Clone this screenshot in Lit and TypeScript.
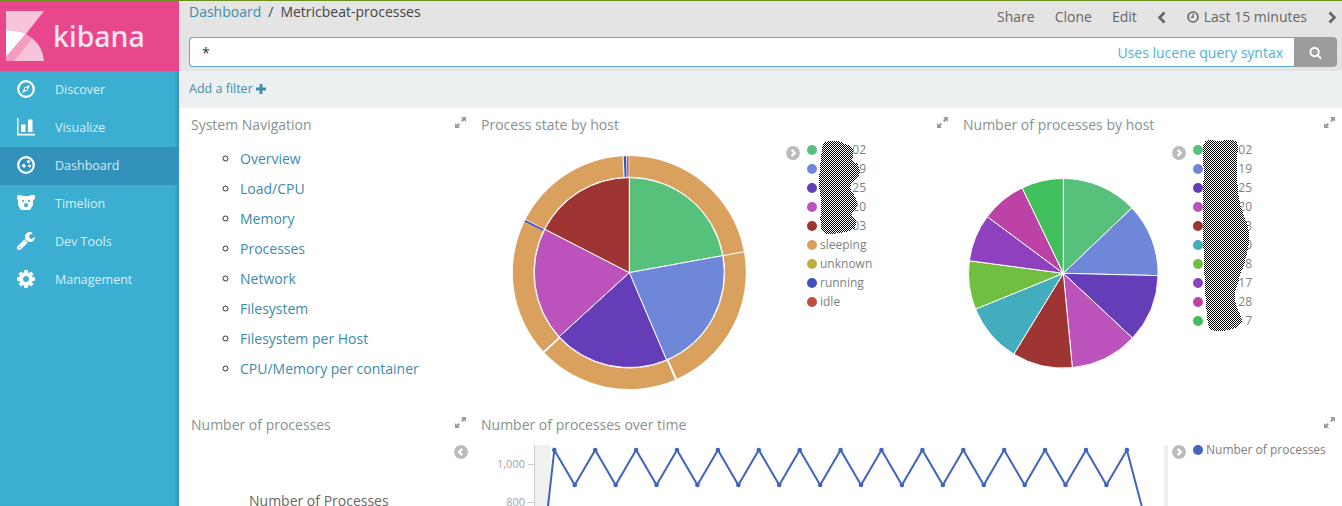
import { LitElement, html, css, svg } from 'lit';
import { customElement } from 'lit/decorators.js';

const WRENCH = 'M448 1472q0-26-19-45t-45-19-45 19-19 45 19 45 45 19 45-19 19-45zm644-420l-682 682q-37 37-90 37-52 0-91-37l-106-108q-38-36-38-90 0-53 38-91l681-681q39 98 114.5 173.5t173.5 114.5zm634-435q0 39-23 106-47 134-164.5 217.5t-258.5 83.5q-185 0-316.5-131.5t-131.5-316.5 131.5-316.5 316.5-131.5q58 0 121.5 16.5t107.5 46.5q16 11 16 28t-16 28l-293 169v224l193 107q5-3 79-48.5t135.5-81 70.5-35.5q15 0 23.5 10t8.5 25z';
const GEAR = 'M1152 896q0-106-75-181t-181-75-181 75-75 181 75 181 181 75 181-75 75-181zm512-109v222q0 12-8 23t-20 13l-185 28q-19 54-39 91 35 50 107 138 10 12 10 25t-9 23q-27 37-99 108t-94 71q-12 0-26-9l-138-108q-44 23-91 38-16 136-29 186-7 28-36 28h-222q-14 0-24.5-8.5t-11.5-21.5l-28-184q-49-16-90-37l-141 107q-10 9-25 9-14 0-25-11-126-114-165-168-7-10-7-23 0-12 8-23 15-21 51-66.5t54-70.5q-27-50-41-99l-183-27q-13-2-21-12.5t-8-23.5v-222q0-12 8-23t19-13l186-28q14-46 39-92-40-57-107-138-10-12-10-24 0-10 9-23 26-36 98.5-107.5t94.5-71.5q13 0 26 10l138 107q44-23 91-38 16-136 29-186 7-28 36-28h222q14 0 24.5 8.5t11.5 21.5l28 184q49 16 90 37l142-107q9-9 24-9 13 0 25 10 129 119 165 170 7 8 7 22 0 12-8 23-15 21-51 66.5t-54 70.5q26 50 41 98l183 28q13 2 22 12.5t9 23.5z';
const SEARCH = 'M1216 832q0-185-131.5-316.5t-316.5-131.5-316.5 131.5-131.5 316.5 131.5 316.5 316.5 131.5 316.5-131.5 131.5-316.5zm512 832q0 52-38 90t-90 38q-54 0-90-38l-343-342q-179 124-399 124-143 0-273.5-55.5t-225-150-150-225-55.5-273.5 55.5-273.5 150-225 225-150 273.5-55.5 273.5 55.5 225 150 150 225 55.5 273.5q0 220-124 399l343 343q37 37 37 90z';

const C = {
  green: '#57c17b', blue: '#6f87d8', purple: '#663db8', magenta: '#bc52bc', red: '#9e3533',
  sleeping: '#daa05d', unknown: '#bfaf40', running: '#4050bf', idle: '#bf5040',
  teal: '#43adbd', lime: '#70bf41', violet: '#8e40bf', pink: '#bd42a5', green2: '#40bf5c',
};

// angles are degrees clockwise from 12 o'clock
function polar(cx: number, cy: number, r: number, deg: number) {
  const a = (deg * Math.PI) / 180;
  return `${(cx + r * Math.sin(a)).toFixed(2)} ${(cy - r * Math.cos(a)).toFixed(2)}`;
}

function wedge(cx: number, cy: number, r0: number, r1: number, a0: number, a1: number) {
  const large = a1 - a0 > 180 ? 1 : 0;
  if (r0 === 0) {
    return `M${cx} ${cy}L${polar(cx, cy, r1, a0)}A${r1} ${r1} 0 ${large} 1 ${polar(cx, cy, r1, a1)}Z`;
  }
  return `M${polar(cx, cy, r0, a0)}L${polar(cx, cy, r1, a0)}A${r1} ${r1} 0 ${large} 1 ${polar(cx, cy, r1, a1)}L${polar(cx, cy, r0, a1)}A${r0} ${r0} 0 ${large} 0 ${polar(cx, cy, r0, a0)}Z`;
}

// smooth closed outline through points given in zoom (3x) coordinates
function blob(pts: number[][]) {
  const p = pts.map(([x, y]) => [x / 3, y / 3]);
  const mid = (a: number[], b: number[]) => `${((a[0] + b[0]) / 2).toFixed(1)} ${((a[1] + b[1]) / 2).toFixed(1)}`;
  let d = `M${mid(p[p.length - 1], p[0])}`;
  p.forEach((pt, i) => {
    d += `Q${pt[0].toFixed(1)} ${pt[1].toFixed(1)} ${mid(pt, p[(i + 1) % p.length])}`;
  });
  return d + 'Z';
}

const innerSlices: [number, number, string][] = [
  [0, 79.7, C.green], [79.7, 156.9, C.blue], [156.9, 227.6, C.purple], [227.6, 297.2, C.magenta], [297.2, 360, C.red],
];
const outerSlices: [number, number, string][] = [
  [0, 79.4, C.sleeping], [80, 155.8, C.sleeping], [156.9, 226.6, C.sleeping], [227.6, 295.9, C.sleeping],
  [295.9, 296.9, C.running], [297.2, 356.6, C.sleeping], [357.2, 358.4, C.running], [358.8, 359.6, C.idle],
];
const hostSlices: [number, number, string][] = [
  [0, 46.4, C.green], [46.4, 91.4, C.blue], [91.4, 133.1, C.purple], [133.1, 174.5, C.magenta], [174.5, 211.5, C.red],
  [211.5, 247.8, C.teal], [247.8, 277.6, C.lime], [277.6, 306.7, C.violet], [306.7, 334.3, C.pink], [334.3, 360, C.green2],
];

const stateLegend = [
  { c: C.green, t: '02', masked: true }, { c: C.blue, t: '19', masked: true }, { c: C.purple, t: '25', masked: true },
  { c: C.magenta, t: '20', masked: true }, { c: C.red, t: '03', masked: true }, { c: C.sleeping, t: 'sleeping' },
  { c: C.unknown, t: 'unknown' }, { c: C.running, t: 'running' }, { c: C.idle, t: 'idle' },
];
const hostLegend = [
  { c: C.green, t: '02' }, { c: C.blue, t: '19' }, { c: C.purple, t: '25' }, { c: C.magenta, t: '20' }, { c: C.red, t: '3' },
  { c: C.teal, t: '0' }, { c: C.lime, t: '8' }, { c: C.violet, t: '17' }, { c: C.pink, t: '28' }, { c: C.green2, t: '7' },
].map((l) => ({ ...l, masked: true }));

const scribbleState = [[70, 20], [110, 15], [130, 25], [160, 35], [160, 60], [155, 78], [178, 88], [180, 125], [150, 148], [152, 165], [172, 195], [168, 225], [150, 238], [168, 250], [168, 282], [120, 295], [65, 300], [60, 250], [65, 200], [55, 150], [60, 100], [65, 50]];
const scribbleHost = [[25, 20], [50, 12], [70, 22], [100, 12], [130, 20], [128, 50], [124, 90], [126, 130], [132, 200], [150, 250], [165, 290], [160, 340], [150, 380], [132, 430], [115, 490], [132, 530], [145, 565], [110, 585], [60, 590], [40, 580], [35, 530], [30, 470], [28, 400], [25, 330], [25, 250], [22, 180], [28, 110], [22, 60]];

const navItems = ['Overview', 'Load/CPU', 'Memory', 'Processes', 'Network', 'Filesystem', 'Filesystem per Host', 'CPU/Memory per container'];

@customElement('app-root')
export class AppRoot extends LitElement {
  static override styles = css`
    :host {
      display: flex;
      height: 505px;
      border-top: 1px solid #6f8f1f;
      overflow: hidden;
      font-family: 'Open Sans', sans-serif;
      font-size: 14px;
      background: #fff;
    }
    .sidebar {
      width: 179px;
      flex-shrink: 0;
      background: #3caed2;
      box-shadow: inset -5px 0 5px -4px rgba(0, 0, 0, 0.22);
    }
    .logo {
      height: 70px;
      background: #e8488b;
      display: flex;
      align-items: center;
      padding-left: 5px;
      gap: 8px;
      box-sizing: border-box;
    }
    .logo-text {
      color: #fde6f0;
      font-family: 'Noto Sans', sans-serif;
      font-size: 28.5px;
      font-weight: 500;
    }
    .side-item {
      height: 38px;
      box-sizing: border-box;
      padding-bottom: 2px;
      display: flex;
      align-items: center;
      color: rgba(255, 255, 255, 0.82);
      font-size: 12.5px;
    }
    .side-item.active {
      background: #3292bc;
    }
    .side-icon {
      width: 55px;
      display: flex;
      justify-content: center;
      padding-right: 3px;
      box-sizing: border-box;
    }
    .main {
      flex: 1;
      min-width: 0;
    }
    .topbar {
      height: 70px;
      background: #e4e4e4;
      box-sizing: border-box;
      padding: 0 5px 0 10px;
    }
    .top-row {
      height: 36px;
      display: flex;
      justify-content: space-between;
      align-items: flex-start;
      line-height: 22px;
    }
    .crumbs {
      display: flex;
      gap: 7px;
      color: #444;
    }
    .crumbs a {
      color: #3f8dae;
    }
    .actions {
      display: flex;
      align-items: center;
      margin-top: 5px;
      color: #666;
    }
    .actions .act {
      margin-right: 20px;
    }
    .actions svg {
      display: block;
    }
    .actions .wider {
      margin-right: 21px;
    }
    .actions .clock {
      margin-right: 5px;
    }
    .search {
      display: flex;
      height: 30px;
    }
    .query {
      flex: 1;
      display: flex;
      justify-content: space-between;
      align-items: center;
      background: #fff;
      border: 1px solid #5fabc8;
      border-right: none;
      border-radius: 4px 0 0 4px;
      padding: 0 11px 0 12px;
    }
    .query .star {
      color: #333;
    }
    .query .hint {
      color: #4fb2d6;
    }
    .search-btn {
      width: 43px;
      background: #9c9c9c;
      border-radius: 0 4px 4px 0;
      display: flex;
      align-items: center;
      justify-content: center;
    }
    .filters {
      height: 37px;
      box-sizing: border-box;
      padding: 0 0 2px 10px;
      background: #ecf0f1;
      display: flex;
      align-items: center;
      gap: 3px;
      color: #3f8dae;
      font-size: 12.5px;
    }
    .dashboard {
      display: grid;
      grid-template-columns: 290px 482px 1fr;
      grid-template-rows: 300px 98px;
      padding-left: 1px;
    }
    .panel {
      min-width: 0;
      overflow: hidden;
    }
    .wide {
      grid-column: 2 / 4;
    }
    .head {
      height: 31px;
      box-sizing: border-box;
      padding: 8px 4px 0 11px;
      display: flex;
      justify-content: space-between;
      line-height: 18px;
      color: #86938f;
      font-size: 14px;
    }
    .head.last {
      padding-right: 7px;
    }
    .expand {
      margin-top: 1px;
    }
    .links {
      margin: 5px 0 0;
      padding: 0 0 0 60px;
      list-style: circle;
      color: #333;
    }
    .links li {
      height: 30px;
      line-height: 30px;
    }
    .links a {
      color: #3c8bad;
    }
    .body {
      display: flex;
      align-items: flex-start;
    }
    .body > svg {
      display: block;
      flex-shrink: 0;
    }
    .legend {
      position: relative;
      display: flex;
      align-items: flex-start;
    }
    .toggle {
      display: block;
      flex-shrink: 0;
    }
    .toggle-slot {
      margin: 7px 7px 0 0;
    }
    .legend-list {
      margin: 1px 0 0;
      padding: 0;
      list-style: none;
    }
    .legend-list li {
      height: 19px;
      display: flex;
      align-items: center;
      font-size: 12px;
      color: #7f7f7f;
      white-space: nowrap;
    }
    .dot {
      width: 10px;
      height: 10px;
      border-radius: 50%;
      margin-right: 3px;
      flex-shrink: 0;
    }
    .masked {
      width: 46px;
      text-align: right;
    }
    .scribble {
      position: absolute;
      display: block;
    }
    .series-legend {
      margin: 6px 0 0 4px;
    }
    .series-legend .toggle-slot {
      margin-top: 0;
    }
    .series-legend .legend-list {
      margin-top: -5px;
    }
    .metric {
      position: relative;
      height: 67px;
    }
    .metric-toggle {
      position: absolute;
      top: 6px;
      right: 2px;
    }
    .metric-label {
      padding: 52px 0 0 69px;
      line-height: 20px;
      color: #666;
    }
    .axis-text {
      font-size: 11px;
      fill: #a3a3a3;
      font-family: 'Open Sans', sans-serif;
    }
  `;

  private chevron(dir: 'left' | 'right') {
    const pts = dir === 'right' ? '5.8,4 9,7.3 5.8,10.6' : '8.4,4 5.2,7.3 8.4,10.6';
    return html`<svg class="toggle" width="14" height="14" viewBox="0 0 14.4 14.6">
      <circle cx="7.2" cy="7.3" r="7.2" fill="#bbb"></circle>
      <polyline points=${pts} fill="none" stroke="#fff" stroke-width="2.4"></polyline>
    </svg>`;
  }

  private expandIcon() {
    return html`<svg class="expand" width="11" height="11" viewBox="0 0 11 11" fill="#9a9a9a">
      <path d="M6 0h5v5L9.3 3.3 7.6 5 6 3.4l1.7-1.7zM0 6l1.7 1.7L3.4 6 5 7.6 3.3 9.3 5 11H0z"></path>
    </svg>`;
  }

  private scribble(points: number[][], id: string, w: number, h: number, left: number, top: number) {
    return html`<svg class="scribble" style="left:${left}px;top:${top}px" width=${w} height=${h} shape-rendering="crispEdges">
      <defs>
        <pattern id=${id} width="2" height="2" patternUnits="userSpaceOnUse">
          <rect width="2" height="2" fill="#fff"></rect>
          <rect width="1" height="1" fill="#000"></rect>
          <rect x="1" y="1" width="1" height="1" fill="#000"></rect>
        </pattern>
      </defs>
      <path d=${blob(points)} fill="url(#${id})"></path>
    </svg>`;
  }

  private legendList(items: { c: string; t: string; masked?: boolean }[]) {
    return html`<ul class="legend-list">
      ${items.map((l) => html`<li>
        <span class="dot" style="background:${l.c}"></span>
        <span class=${l.masked ? 'masked' : ''}>${l.t}</span>
      </li>`)}
    </ul>`;
  }

  private stateChart() {
    const cx = 159.3, cy = 133.6;
    return html`<svg width="316" height="267" viewBox="0 0 316 267">
      ${outerSlices.map(([a, b, c]) => svg`<path d=${wedge(cx, cy, 95.8, 116.5, a, b)} fill=${c}></path>`)}
      ${innerSlices.map(([a, b, c]) => svg`<path d=${wedge(cx, cy, 0, 95, a, b)} fill=${c} stroke="#fff" stroke-width="1"></path>`)}
    </svg>`;
  }

  private hostChart() {
    const cx = 111.3, cy = 134.3;
    return html`<svg width="220" height="267" viewBox="0 0 220 267">
      ${hostSlices.map(([a, b, c]) => svg`<path d=${wedge(cx, cy, 0, 94.8, a, b)} fill=${c} stroke="#fff" stroke-width="1"></path>`)}
    </svg>`;
  }

  private lineChart() {
    // x offset 470, y offset 439 from the page
    const pts: number[][] = [[78, 67]];
    for (let i = 0; i < 15; i++) {
      pts.push([84.3 + i * 40.9, 11]);
      if (i < 14) pts.push([104.75 + i * 40.9, 46]);
    }
    const line = [...pts, [671.7, 67]].map((p) => p.join(',')).join(' ');
    return html`<svg width="698" height="67" viewBox="0 0 698 67">
      <rect x="65" y="6" width="15.5" height="61" fill="#f0f0f0"></rect>
      <path d="M64.5 6V67M58 25.5h6.5M58 63.5h6.5" stroke="#ccc" fill="none"></path>
      <text class="axis-text" x="55" y="29" text-anchor="end">1,000</text>
      <text class="axis-text" x="55" y="67" text-anchor="end">800</text>
      <polyline points=${line} fill="none" stroke="#3f64bf" stroke-width="2"></polyline>
      ${pts.slice(1).map(([x, y]) => svg`<circle cx=${x} cy=${y} r="2.3" fill="#3f64bf"></circle>`)}
      <rect x="694" y="6" width="4" height="61" fill="#eee"></rect>
    </svg>`;
  }

  override render() {
    return html`
      <aside class="sidebar">
        <div class="logo">
          <svg width="40" height="50" viewBox="0 0 40 50">
            <path d="M1 0h38L21 23Q12 19 1 19z" fill="#f8c4dc"></path>
            <path d="M1 19Q12 19 21 23L1 46z" fill="#fff"></path>
            <path d="M1 46L21 23L27 27L9 50H1z" fill="#f49cc2"></path>
            <path d="M9 50L27 27Q38 36 39 50z" fill="#f8c4dc"></path>
          </svg>
          <span class="logo-text">kibana</span>
        </div>
        <div class="side-item">
          <span class="side-icon"><svg width="18" height="18" viewBox="0 0 18 18">
            <circle cx="9" cy="9" r="7.8" fill="none" stroke="#fff" stroke-width="2.2"></circle>
            <path d="M13 5L10.6 10.6L5 13L7.4 7.4z" fill="#fff"></path>
            <circle cx="9" cy="9" r="1.2" fill="#3caed2"></circle>
          </svg></span>Discover
        </div>
        <div class="side-item">
          <span class="side-icon"><svg width="18" height="18" viewBox="0 0 18 18" fill="#fff">
            <path d="M0 0h1.5v15.8H18V17.5H0z"></path>
            <rect x="4" y="6.5" width="4.5" height="7.5"></rect>
            <rect x="11" y="1.5" width="4.5" height="12.5"></rect>
          </svg></span>Visualize
        </div>
        <div class="side-item active">
          <span class="side-icon"><svg width="18" height="18" viewBox="0 0 18 18">
            <circle cx="9" cy="9" r="7.8" fill="none" stroke="#fff" stroke-width="2.2"></circle>
            <path d="M4.5 9.5L7 7.5L9 10L7 12z" fill="#fff"></path>
            <circle cx="11.5" cy="5.6" r="1.7" fill="#fff"></circle>
            <circle cx="12.6" cy="10" r="1.4" fill="#fff"></circle>
          </svg></span>Dashboard
        </div>
        <div class="side-item">
          <span class="side-icon"><svg width="18" height="16" viewBox="0 0 18 16">
            <path d="M1 0h3l2 1h6l2-1h3l1 1v3l-2 1v5l-3 5H4L1 10V5L0 4V1z" fill="#fff"></path>
            <circle cx="6" cy="6" r="1.1" fill="#3caed2"></circle>
            <circle cx="12" cy="6" r="1.1" fill="#3caed2"></circle>
            <path d="M7 8.5h4L10.5 12h-3z" fill="#3caed2"></path>
          </svg></span>Timelion
        </div>
        <div class="side-item">
          <span class="side-icon"><svg width="18" height="18" viewBox="128 128 1600 1600">
            <path d=${WRENCH} fill="#fff"></path>
          </svg></span>Dev Tools
        </div>
        <div class="side-item">
          <span class="side-icon"><svg width="18" height="18" viewBox="128 128 1536 1536">
            <path d=${GEAR} fill="#fff"></path>
          </svg></span>Management
        </div>
      </aside>

      <div class="main">
        <div class="topbar">
          <div class="top-row">
            <div class="crumbs"><a>Dashboard</a><span>/</span><span>Metricbeat-processes</span></div>
            <div class="actions">
              <span class="act">Share</span><span class="act">Clone</span><span class="act">Edit</span>
              <svg class="wider" width="9" height="13" viewBox="0 0 9 13"><polyline points="7.5,1.5 2.5,6.5 7.5,11.5" fill="none" stroke="#666" stroke-width="2.6"></polyline></svg>
              <svg class="clock" width="12" height="12" viewBox="0 0 12 12">
                <circle cx="6" cy="6" r="5" fill="none" stroke="#666" stroke-width="1.6"></circle>
                <polyline points="6.2,2.8 6.2,6.4 3.6,6.4" fill="none" stroke="#666" stroke-width="1.3"></polyline>
              </svg>
              <span class="act wider">Last 15 minutes</span>
              <svg width="9" height="13" viewBox="0 0 9 13"><polyline points="1.5,1.5 6.5,6.5 1.5,11.5" fill="none" stroke="#666" stroke-width="2.6"></polyline></svg>
            </div>
          </div>
          <div class="search">
            <div class="query"><span class="star">*</span><span class="hint">Uses lucene query syntax</span></div>
            <div class="search-btn"><svg width="13" height="13" viewBox="0 0 1792 1792"><path d=${SEARCH} fill="#fff"></path></svg></div>
          </div>
        </div>
        <div class="filters">
          Add a filter
          <svg width="10" height="10" viewBox="0 0 10 10"><path d="M3.6 0h2.8v3.6H10v2.8H6.4V10H3.6V6.4H0V3.6h3.6z" fill="#3f8dae"></path></svg>
        </div>
        <div class="dashboard">
          <section class="panel">
            <div class="head"><span>System Navigation</span>${this.expandIcon()}</div>
            <ul class="links">${navItems.map((n) => html`<li><a>${n}</a></li>`)}</ul>
          </section>
          <section class="panel">
            <div class="head"><span>Process state by host</span>${this.expandIcon()}</div>
            <div class="body">
              ${this.stateChart()}
              <div class="legend">
                <span class="toggle-slot">${this.chevron('right')}</span>
                ${this.legendList(stateLegend)}
                ${this.scribble(scribbleState, 'checkA', 64, 105, 14, -4)}
              </div>
            </div>
          </section>
          <section class="panel">
            <div class="head last"><span>Number of processes by host</span>${this.expandIcon()}</div>
            <div class="body">
              ${this.hostChart()}
              <div class="legend">
                <span class="toggle-slot">${this.chevron('right')}</span>
                ${this.legendList(hostLegend)}
                ${this.scribble(scribbleHost, 'checkB', 60, 200, 23, -4)}
              </div>
            </div>
          </section>
          <section class="panel">
            <div class="head"><span>Number of processes</span>${this.expandIcon()}</div>
            <div class="metric">
              <span class="metric-toggle">${this.chevron('left')}</span>
              <div class="metric-label">Number of Processes</div>
            </div>
          </section>
          <section class="panel wide">
            <div class="head last"><span>Number of processes over time</span>${this.expandIcon()}</div>
            <div class="body">
              ${this.lineChart()}
              <div class="legend series-legend">
                <span class="toggle-slot">${this.chevron('right')}</span>
                <ul class="legend-list"><li><span class="dot" style="background:#4267c2"></span><span>Number of processes</span></li></ul>
              </div>
            </div>
          </section>
        </div>
      </div>
    `;
  }
}

declare global {
  interface HTMLElementTagNameMap {
    'app-root': AppRoot;
  }
}
